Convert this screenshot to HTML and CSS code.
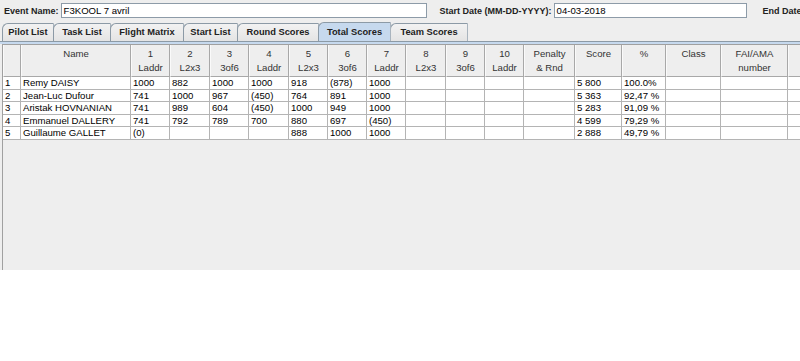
FILE: index.html
```html
<!DOCTYPE html>
<html lang="en">
<head>
  <meta charset="UTF-8" />
  <title>Total Scores</title>
  <link rel="stylesheet" href="styles.css">
</head>
<body>
  <div class="app">
    <!-- Event info -->
    <div class="top-bar">
      <span class="label">Event Name:</span>
      <div class="field event-field">F3KOOL 7 avril</div>
      <span class="label gap">Start Date (MM-DD-YYYY):</span>
      <div class="field date-field">04-03-2018</div>
      <span class="label gap end">End Date (MM-DD-YYYY):</span>
    </div>

    <!-- Tabs -->
    <div class="tabs">
      <div class="tab">Pilot List</div>
      <div class="tab">Task List</div>
      <div class="tab">Flight Matrix</div>
      <div class="tab">Start List</div>
      <div class="tab">Round Scores</div>
      <div class="tab active">Total Scores</div>
      <div class="tab">Team Scores</div>
    </div>

    <div class="tab-body">
      <div class="scroll">
        <div class="row head">
          <div class="cell"></div>
          <div class="cell">Name</div>
          <div class="cell">1<br>Laddr</div>
          <div class="cell">2<br>L2x3</div>
          <div class="cell">3<br>3of6</div>
          <div class="cell">4<br>Laddr</div>
          <div class="cell">5<br>L2x3</div>
          <div class="cell">6<br>3of6</div>
          <div class="cell">7<br>Laddr</div>
          <div class="cell">8<br>L2x3</div>
          <div class="cell">9<br>3of6</div>
          <div class="cell">10<br>Laddr</div>
          <div class="cell">Penalty<br>&amp; Rnd</div>
          <div class="cell">Score</div>
          <div class="cell">%</div>
          <div class="cell">Class</div>
          <div class="cell">FAI/AMA<br>number</div>
          <div class="cell"></div>
        </div>
        <div id="rows"></div>
      </div>
    </div>
  </div>

  <script>
    // Pilot totals
    const pilots = [
      ['1', 'Remy DAISY', '1000', '882', '1000', '1000', '918', '(878)', '1000', '5 800', '100.0%'],
      ['2', 'Jean-Luc Dufour', '741', '1000', '967', '(450)', '764', '891', '1000', '5 363', '92,47 %'],
      ['3', 'Aristak HOVNANIAN', '741', '989', '604', '(450)', '1000', '949', '1000', '5 283', '91,09 %'],
      ['4', 'Emmanuel DALLERY', '741', '792', '789', '700', '880', '697', '(450)', '4 599', '79,29 %'],
      ['5', 'Guillaume GALLET', '(0)', '', '', '', '888', '1000', '1000', '2 888', '49,79 %']
    ];

    function buildRows() {
      const box = document.getElementById('rows');
      pilots.forEach(p => {
        const cells = [p[0], p[1], p[2], p[3], p[4], p[5], p[6], p[7], p[8], '', '', '', '', p[9], p[10], '', '', ''];
        const row = document.createElement('div');
        row.className = 'row';
        cells.forEach(text => {
          const c = document.createElement('div');
          c.className = 'cell';
          c.textContent = text;
          row.appendChild(c);
        });
        box.appendChild(row);
      });
    }

    buildRows();
  </script>
</body>
</html>
```

FILE: styles.css
```css
:root {
  --panel: #eeeeee;
  --tab-border: #8c9aa6;
  --selected: #c6d9ee;
  --grid: #b4b4b4;
  --cols: 18px 110px 39px 40px 39px 40px 39px 39px 39px 40px 39px 39px 51px 47px 44px 55px 67px 60px;
}

body {
  margin: 0;
  background: white;
  font-family: 'Liberation Sans', Arial, sans-serif;
  color: #000;
}

.app {
  height: 270px;
  background: var(--panel);
  overflow: hidden;
  display: flex;
  flex-direction: column;
}

.top-bar {
  display: flex;
  align-items: center;
  height: 15px;
  padding: 3px 0 0 4px;
  white-space: nowrap;
  overflow: hidden;
}

.label {
  font-weight: bold;
  font-size: 9px;
  color: #222;
}

.label.gap {
  margin-left: 13px;
}

.label.end {
  margin-left: 16px;
}

.field {
  box-sizing: border-box;
  height: 15px;
  background: white;
  border: 1px solid #8d9ba8;
  font-size: 9.6px;
  line-height: 13px;
  padding-left: 2px;
  margin-left: 2px;
  flex-shrink: 0;
}

.event-field {
  width: 366px;
}

.date-field {
  width: 193px;
}

.tabs {
  display: flex;
  margin-top: 5px;
  padding-left: 2px;
  height: 18px;
}

.tab {
  box-sizing: border-box;
  flex-shrink: 0;
  height: 18px;
  border: 1px solid var(--tab-border);
  border-bottom: none;
  border-right-color: #a9b4be;
  border-top-left-radius: 6px;
  background: linear-gradient(#f2f2f2, #e4e4e4);
  font-weight: bold;
  font-size: 9.3px;
  line-height: 17px;
  text-align: center;
  color: #222;
  white-space: nowrap;
  margin-right: -1px;
}

.tab:nth-child(1) { width: 52px; }
.tab:nth-child(2) { width: 58px; }
.tab:nth-child(3) { width: 74px; }
.tab:nth-child(4) { width: 55px; }
.tab:nth-child(5) { width: 82px; }
.tab:nth-child(6) { width: 73px; }
.tab:nth-child(7) { width: 78px; }

.tab.active {
  background: var(--selected);
  position: relative;
  z-index: 1;
  height: 19px;
  margin-top: -1px;
  margin-bottom: -1px;
  line-height: 18px;
}

.tab-body {
  flex: 1;
  border-top: 1px solid var(--tab-border);
  padding-top: 2px;
  background: linear-gradient(var(--selected) 2px, var(--panel) 2px);
  display: flex;
  flex-direction: column;
}

.scroll {
  flex: 1;
  margin-left: 2px;
  border-top: 1px solid #a0a0a0;
  border-left: 1px solid #a0a0a0;
  overflow: hidden;
  background: var(--panel);
}

.row {
  display: grid;
  grid-template-columns: var(--cols);
  height: 12.6px;
  background: white;
}

.cell {
  box-sizing: border-box;
  border-right: 1px solid var(--grid);
  border-bottom: 1px solid var(--grid);
  font-size: 9.6px;
  line-height: 12px;
  padding-left: 2px;
  white-space: nowrap;
  overflow: hidden;
}

.row.head {
  height: 32px;
  background: var(--panel);
}

.row.head .cell {
  text-align: center;
  padding: 2px 0 0;
  line-height: 14px;
  color: #333;
  border-right-color: #a8a8a8;
  border-bottom-color: #a8a8a8;
  border-left: 1px solid #fafafa;
}
```
